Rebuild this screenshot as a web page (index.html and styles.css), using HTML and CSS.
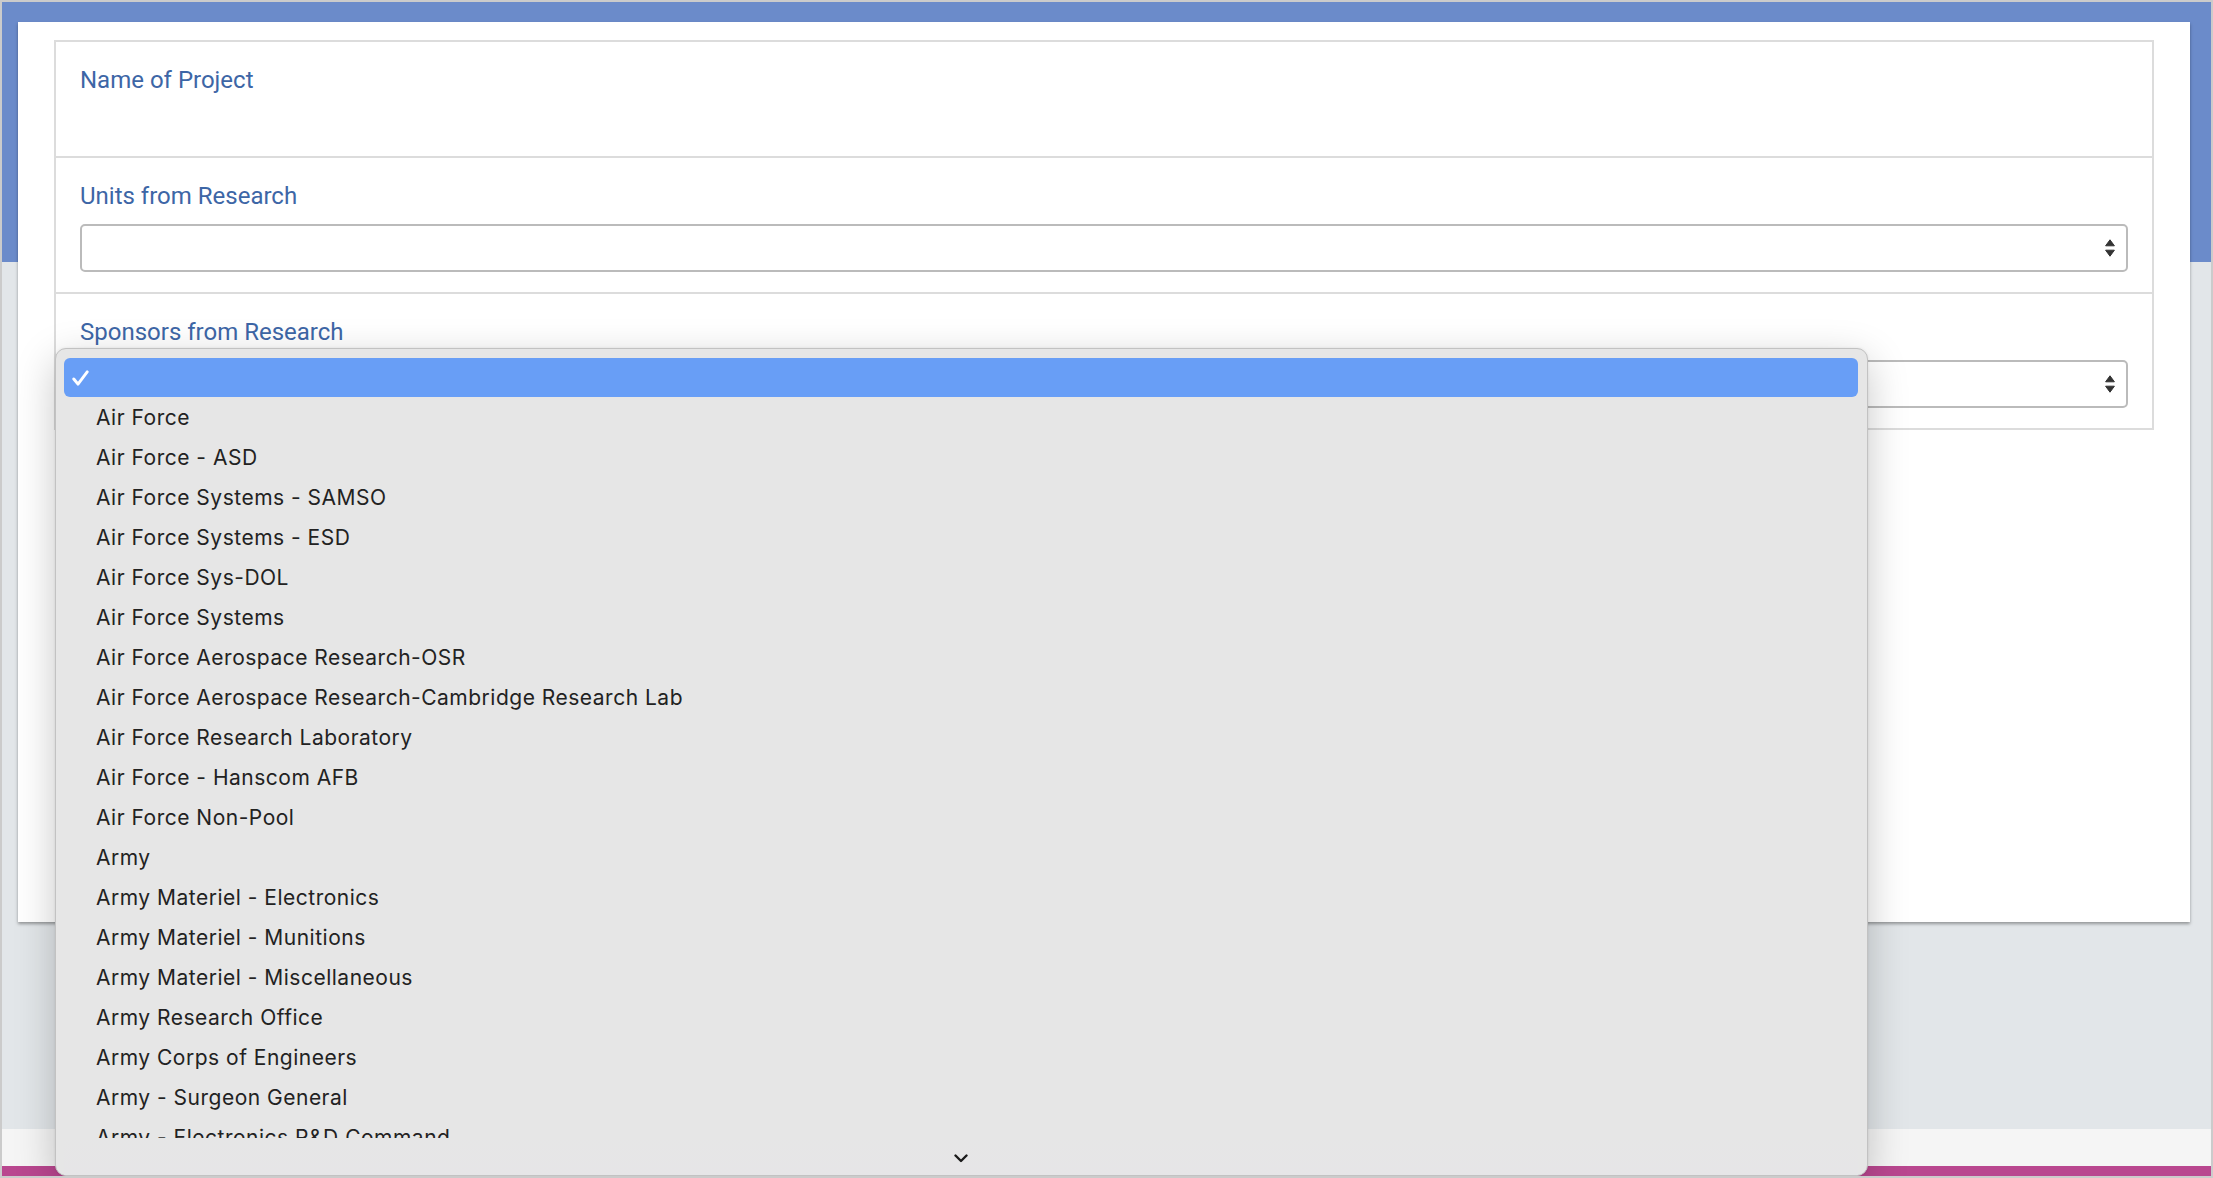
FILE: index.html
```html
<!DOCTYPE html>
<html lang="en">
<head>
<meta charset="utf-8">
<title>Project form</title>
<link rel="stylesheet" href="styles.css">
</head>
<body>
<div class="frame">
  <div class="page">
    <div class="band"></div>
    <main class="card">
      <div class="form">
        <div class="row">
          <div class="label">Name of Project</div>
          <div class="value"></div>
        </div>
        <div class="row">
          <div class="label">Units from Research</div>
          <div class="select">
            <svg class="arrows" viewBox="0 0 10 18" width="10" height="18"><path d="M5 0.8 L9.4 6.8 L0.6 6.8 Z M0.6 11.2 L9.4 11.2 L5 17.2 Z" fill="#333" stroke="#333" stroke-width="1" stroke-linejoin="round"/></svg>
          </div>
        </div>
        <div class="row">
          <div class="label">Sponsors from Research</div>
          <div class="select">
            <svg class="arrows" viewBox="0 0 10 18" width="10" height="18"><path d="M5 0.8 L9.4 6.8 L0.6 6.8 Z M0.6 11.2 L9.4 11.2 L5 17.2 Z" fill="#333" stroke="#333" stroke-width="1" stroke-linejoin="round"/></svg>
          </div>
        </div>
      </div>
    </main>
    <div class="spacer"></div>
    <footer class="footer"></footer>
    <div class="accent"></div>
  </div>

  <div class="popup">
    <div class="list">
      <div class="opt selected"><svg class="check" viewBox="0 0 17 16" width="17" height="16"><polyline points="1.8,9 6,14.2 15.2,1.8" fill="none" stroke="#fff" stroke-width="2.9" stroke-linecap="round" stroke-linejoin="round"/></svg></div>
      <div class="opt">Air Force</div>
      <div class="opt">Air Force - ASD</div>
      <div class="opt">Air Force Systems - SAMSO</div>
      <div class="opt">Air Force Systems - ESD</div>
      <div class="opt">Air Force Sys-DOL</div>
      <div class="opt">Air Force Systems</div>
      <div class="opt">Air Force Aerospace Research-OSR</div>
      <div class="opt">Air Force Aerospace Research-Cambridge Research Lab</div>
      <div class="opt">Air Force Research Laboratory</div>
      <div class="opt">Air Force - Hanscom AFB</div>
      <div class="opt">Air Force Non-Pool</div>
      <div class="opt">Army</div>
      <div class="opt">Army Materiel - Electronics</div>
      <div class="opt">Army Materiel - Munitions</div>
      <div class="opt">Army Materiel - Miscellaneous</div>
      <div class="opt">Army Research Office</div>
      <div class="opt">Army Corps of Engineers</div>
      <div class="opt">Army - Surgeon General</div>
      <div class="opt">Army - Electronics R&amp;D Command</div>
    </div>
    <div class="scroll-more">
      <svg viewBox="0 0 14 9" width="14" height="9"><polyline points="1.5,1.5 7,7 12.5,1.5" fill="none" stroke="#1a1a1a" stroke-width="2.4" stroke-linecap="round" stroke-linejoin="round"/></svg>
    </div>
  </div>
</div>
</body>
</html>
```

FILE: styles.css
```css
* { box-sizing: border-box; }
html, body { margin: 0; padding: 0; }
body { background: #cbcbcb; }

.frame {
  position: relative;
  width: 2213px;
  height: 1178px;
  border: 2px solid #cbcbcb;
  overflow: hidden;
}

.page {
  display: flex;
  flex-direction: column;
  height: 100%;
  background: #e2e6e9;
}

.band {
  height: 260px;
  flex: none;
  background: #6b8bca;
}

.card {
  flex: none;
  height: 900px;
  margin: -240px 21px 0 16px;
  padding: 18px 36px;
  background: #fff;
  box-shadow: 0 2px 3px rgba(0, 0, 0, 0.35);
}

.form {
  border: 2px solid #dcdcdc;
}

.row {
  padding: 20px 24px;
  border-top: 2px solid #dcdcdc;
}
.row:first-child { border-top: 0; }

.label {
  font-family: Roboto, "Liberation Sans", sans-serif;
  font-size: 24px;
  line-height: 36px;
  color: #3d66a6;
}

.value { height: 38px; }

.select {
  margin-top: 10px;
  height: 48px;
  border: 2px solid #bbbbbb;
  border-radius: 5px;
  background: #fff;
  display: flex;
  align-items: center;
  justify-content: flex-end;
  padding-right: 11px;
}
.arrows { display: block; }

.spacer { flex: 1; }

.footer {
  flex: none;
  height: 37px;
  background: #f5f5f5;
}
.accent {
  flex: none;
  height: 10px;
  background: #b9478f;
}

.popup {
  position: absolute;
  left: 53px;
  top: 346px;
  width: 1813px;
  bottom: 0;
  background: #e6e6e6;
  border: 1px solid #c2c2c2;
  border-radius: 11px;
  box-shadow: 0 12px 40px rgba(0, 0, 0, 0.22), 0 0 3px rgba(0, 0, 0, 0.08);
  padding: 9px 9px 0 8px;
  display: flex;
  flex-direction: column;
  font-family: Inter, "Noto Sans", sans-serif;
  font-size: 21px;
  letter-spacing: 0.5px;
  color: #222;
}

.list {
  height: 780px;
  overflow: hidden;
  flex: none;
}

.opt {
  height: 40px;
  line-height: 40px;
  padding-left: 32px;
  white-space: nowrap;
  position: relative;
}
.opt.selected {
  height: 39px;
  margin-bottom: 1px;
  background: #689ef6;
  border-radius: 6px;
}
.check {
  position: absolute;
  left: 8px;
  top: 12px;
}

.scroll-more {
  flex: 1;
  display: flex;
  align-items: center;
  justify-content: center;
  padding-top: 4px;
  background: linear-gradient(#e6e6e6, #e6e5e7);
}
.scroll-more svg { display: block; }
```
